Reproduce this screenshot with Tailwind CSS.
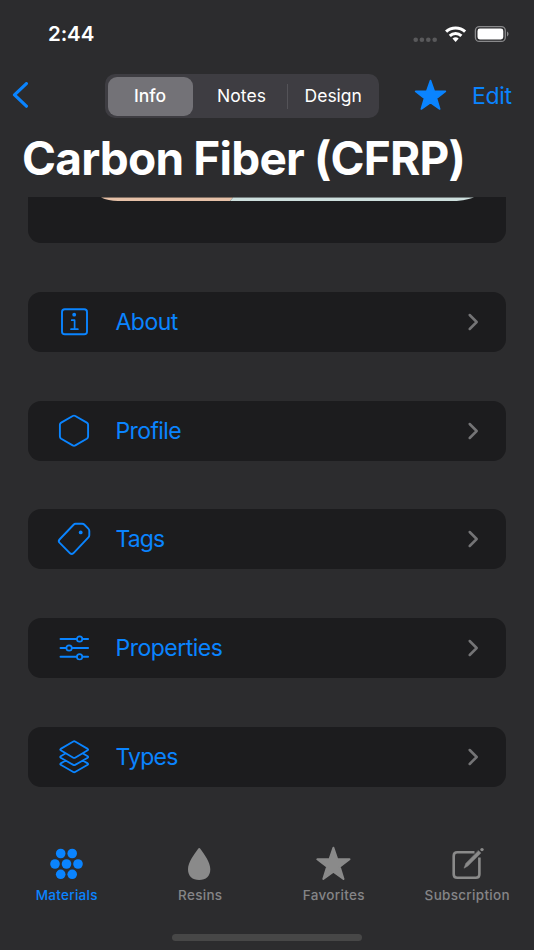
<!DOCTYPE html>
<html lang="en">
<head>
<meta charset="utf-8">
<title>Carbon Fiber (CFRP)</title>
<script src="https://cdn.jsdelivr.net/npm/@tailwindcss/browser@4"></script>
</head>
<body class="bg-[#2c2c2e]">
<div class="flex h-[950px] w-[534px] flex-col overflow-hidden bg-[#2c2c2e] font-['Inter','Liberation_Sans',sans-serif] text-white">
  <!-- Status bar -->
  <div class="flex h-[68px] shrink-0 items-center justify-between pr-[24px] pl-[48px]">
    <span class="text-[20.500px] leading-[24px] font-semibold tracking-[-0.1px]">2:44</span>
    <svg class="h-[24px] w-[98px]" viewBox="0 0 98 24" fill="none">
      <g fill="#59595b"><circle cx="3.7" cy="17.8" r="2.3"/><circle cx="9.9" cy="17.8" r="2.3"/><circle cx="16.3" cy="17.8" r="2.3"/><circle cx="22.7" cy="17.8" r="2.3"/></g>
      <g stroke="#fff" stroke-width="3.100"><path d="M34.1 9.7a14 14 0 0 1 19 0"/><path d="M37.8 13.8a8.600 8.600 0 0 1 11.600 0"/></g>
      <path fill="#fff" d="M40.500 16.600a4.800 4.800 0 0 1 6.200 0L43.600 20Z"/>
      <rect x="63.4" y="4.6" width="29.9" height="14.8" rx="4" stroke="#89898b" stroke-width="1.300"/>
      <rect x="65.500" y="6.500" width="25.800" height="11" rx="2.400" fill="#fff"/>
      <path d="M95 9.600c2 .8 2 4 0 4.800Z" fill="#89898b"/>
    </svg>
  </div>
  <!-- Navigation bar -->
  <div class="flex h-[56px] shrink-0 items-center pl-[12px]">
    <svg class="h-[28px] w-[18px]" viewBox="0 0 18 28" fill="none" stroke="#0a84ff" stroke-width="3.200" stroke-linecap="round" stroke-linejoin="round"><path d="M14.400 1.600 2.500 12.900l11.900 11.300"/></svg>
    <div class="ml-[75px] flex h-[44px] w-[273.500px] items-center rounded-[10px] bg-[#3e3d42] p-[3px] text-[17.500px] font-medium">
      <div class="flex h-[39px] w-[85px] shrink-0 items-center justify-center rounded-[9px] bg-[#737277] pr-[1px]">Info</div>
      <div class="flex w-[94px] shrink-0 justify-center pl-[3px] font-normal tracking-[0.1px]">Notes</div>
      <div class="h-[25px] w-px bg-[#545358]"></div>
      <div class="flex flex-1 justify-center pl-[3px] font-normal">Design</div>
    </div>
    <svg class="ml-[34.500px] h-[34px] w-[36px]" viewBox="0 0 36 34" fill="#0a84ff" stroke="#0a84ff" stroke-width="1.600" stroke-linejoin="round"><path d="m17.500 1.600 3.700 10.500 11.200.3-8.900 6.900 3.200 10.700-9.200-6.300-9.200 6.300 3.200-10.700-8.900-6.900 11.200-.3Z"/></svg>
    <span class="ml-[23px] text-[23px] leading-[28px] font-normal tracking-[-0.3px] text-[#0a84ff]">Edit</span>
  </div>
  <h1 class="h-[73px] shrink-0 pt-[6px] pl-[22px] text-[46px] leading-[56px] font-bold tracking-[-0.800px] whitespace-nowrap">Carbon Fiber (CFRP)</h1>
  <!-- Scrolling content -->
  <main class="flex h-[631px] shrink-0 flex-col gap-[48.650px] overflow-hidden px-[28px]">
    <div class="h-[46.400px] shrink-0 rounded-b-[13px] bg-[#1c1c1e]">
      <svg class="h-[5px] w-full" viewBox="0 0 478 5">
        <path d="M73 .4H205L202 4H90Q80 3.500 73 .4Z" fill="#e6c1a8"/>
        <path d="M205 .4H446Q436 4 422 4H202Z" fill="#cddfdd"/>
      </svg>
    </div>
    <div class="flex h-[60px] shrink-0 items-center rounded-[13px] bg-[#1c1c1e] pr-[26px] pl-[28px]">
      <svg class="size-[36px]" viewBox="0 0 36 36" fill="none" stroke="#0a84ff" stroke-width="1.900" stroke-linecap="round" stroke-linejoin="round"><rect x="6" y="5.300" width="25" height="25" rx="2.800"/><path d="M15.700 16.200h2.900v9M15 25.200h6.900" stroke-width="1.700"/><circle cx="18.200" cy="10.700" r="1.900" fill="#0a84ff" stroke="none"/></svg>
      <span class="ml-[23.500px] flex-1 text-[23px] leading-[28px] tracking-[-0.500px] text-[#0a84ff]">About</span>
      <svg class="h-[20px] w-[14px]" viewBox="0 0 14 20" fill="none" stroke="#747476" stroke-width="2.500" stroke-linecap="round" stroke-linejoin="round"><path d="m3.700 3 7 7-7 7"/></svg>
    </div>
    <div class="flex h-[60px] shrink-0 items-center rounded-[13px] bg-[#1c1c1e] pr-[26px] pl-[28px]">
      <svg class="size-[36px]" viewBox="0 0 36 36" fill="none" stroke="#0a84ff" stroke-width="1.900" stroke-linejoin="round"><path d="M16.700 3q1.300-.7 2.600 0l11.500 6.600q1.300.8 1.300 2.200v11.800q0 1.400-1.300 2.200l-11.500 6.600q-1.300.7-2.600 0L5.200 25.800q-1.300-.8-1.300-2.200V11.800q0-1.400 1.300-2.200Z"/></svg>
      <span class="ml-[23.500px] flex-1 text-[23px] leading-[28px] tracking-[-0.600px] text-[#0a84ff]">Profile</span>
      <svg class="h-[20px] w-[14px]" viewBox="0 0 14 20" fill="none" stroke="#747476" stroke-width="2.500" stroke-linecap="round" stroke-linejoin="round"><path d="m3.700 3 7 7-7 7"/></svg>
    </div>
    <div class="flex h-[60px] shrink-0 items-center rounded-[13px] bg-[#1c1c1e] pr-[26px] pl-[28px]">
      <svg class="size-[36px]" viewBox="0 0 36 36" fill="none" stroke="#0a84ff" stroke-width="1.900" stroke-linejoin="round"><path d="M19.500 2.700h6.700q1.200 0 2 .8l4.100 4.200q1 1 1 2.300v4.200q0 1.200-.9 2.100L17.300 32.300q-1.600 1.500-3.200 0L3.500 21.700q-1.500-1.600 0-3.200L17.800 3.500q.7-.8 1.700-.8Z"/><circle cx="24.700" cy="11.400" r="1.900" fill="#0a84ff" stroke="none"/></svg>
      <span class="ml-[23.500px] flex-1 text-[23px] leading-[28px] tracking-[-0.900px] text-[#0a84ff]">Tags</span>
      <svg class="h-[20px] w-[14px]" viewBox="0 0 14 20" fill="none" stroke="#747476" stroke-width="2.500" stroke-linecap="round" stroke-linejoin="round"><path d="m3.700 3 7 7-7 7"/></svg>
    </div>
    <div class="flex h-[60px] shrink-0 items-center rounded-[13px] bg-[#1c1c1e] pr-[26px] pl-[28px]">
      <svg class="size-[36px]" viewBox="0 0 36 36" fill="none" stroke="#0a84ff" stroke-width="1.900" stroke-linecap="round"><path d="M4.500 9h16.200M26.500 9h5.600M4.500 18h5.700M16 18h16.100M4.500 26.800h16.200M26.500 26.800h5.600"/><g stroke-width="1.700"><circle cx="23.600" cy="9" r="2.700"/><circle cx="13.100" cy="18" r="2.700"/><circle cx="23.600" cy="26.800" r="2.700"/></g></svg>
      <span class="ml-[23.500px] flex-1 text-[23px] leading-[28px] tracking-[-0.500px] text-[#0a84ff]">Properties</span>
      <svg class="h-[20px] w-[14px]" viewBox="0 0 14 20" fill="none" stroke="#747476" stroke-width="2.500" stroke-linecap="round" stroke-linejoin="round"><path d="m3.700 3 7 7-7 7"/></svg>
    </div>
    <div class="flex h-[60px] shrink-0 items-center rounded-[13px] bg-[#1c1c1e] pr-[26px] pl-[28px]">
      <svg class="size-[36px]" viewBox="0 0 36 36" fill="none" stroke="#0a84ff" stroke-width="1.800" stroke-linejoin="round"><path d="M17.300 2.500q.9-.5 1.800 0l12.600 7.400q1 .7 0 1.400l-12.600 7.400q-.9.500-1.800 0l-12.600-7.400q-1-.7 0-1.400Z"/><path d="m9.800 14.300-5.100 3q-1 .7 0 1.400l12.600 7.200q.9.500 1.800 0l12.600-7.200q1-.7 0-1.400l-5.100-3M9.800 21.500l-5.100 2.900q-1 .7 0 1.400l12.600 7.200q.9.500 1.800 0l12.600-7.200q1-.7 0-1.400l-5.100-2.900"/></svg>
      <span class="ml-[23.500px] flex-1 text-[23px] leading-[28px] tracking-[-0.800px] text-[#0a84ff]">Types</span>
      <svg class="h-[20px] w-[14px]" viewBox="0 0 14 20" fill="none" stroke="#747476" stroke-width="2.500" stroke-linecap="round" stroke-linejoin="round"><path d="m3.700 3 7 7-7 7"/></svg>
    </div>
  </main>
  <!-- Tab bar -->
  <nav class="grid h-[105px] shrink-0 grid-cols-4 pt-[17px] text-[13.500px] leading-[18px] font-medium text-[#858587]">
    <div class="flex flex-col items-center text-[#0a84ff]">
      <svg class="h-[38px] w-[40px]" viewBox="0 0 40 38" fill="#0a84ff"><circle cx="13.700" cy="8.500" r="4.800"/><circle cx="25.200" cy="8.500" r="4.800"/><circle cx="8" cy="19" r="4.800"/><circle cx="19.500" cy="19" r="4.800"/><circle cx="31" cy="19" r="4.800"/><circle cx="13.700" cy="29.300" r="4.800"/><circle cx="25.200" cy="29.300" r="4.800"/></svg>
      <span class="mt-[3px] tracking-[0.300px]">Materials</span>
    </div>
    <div class="flex flex-col items-center">
      <svg class="h-[38px] w-[40px]" viewBox="0 0 40 38" fill="#8a8a8a"><path d="M18 4Q19.200 2.200 20.500 4C24 9.200 30.300 17 30.300 24.200 30.300 31 26 35 19.200 35S8 31 8 24.200C8 17 14.500 9.200 18 4Z"/></svg>
      <span class="mt-[3px] tracking-[0.300px]">Resins</span>
    </div>
    <div class="flex flex-col items-center">
      <svg class="h-[38px] w-[40px]" viewBox="0 0 40 38" fill="#8a8a8a" stroke="#8a8a8a" stroke-width="2" stroke-linejoin="round"><path d="m19.400 2.700 3.800 11.300 12.300.3-9.800 7.400 3.800 12.300-10.100-7.300-10.100 7.300 3.800-12.300-9.800-7.400 12.300-.3Z"/></svg>
      <span class="mt-[3px] tracking-[0.300px]">Favorites</span>
    </div>
    <div class="flex flex-col items-center">
      <svg class="h-[38px] w-[40px]" viewBox="0 0 40 38" fill="none" stroke="#8a8a8a" stroke-linecap="round" stroke-linejoin="round"><path stroke-width="2.600" stroke-linecap="butt" d="M27.500 7.300H10.300Q6.700 7.300 6.700 10.900V29.200Q6.700 32.800 10.300 32.800H28.800Q32.400 32.800 32.400 29.200V12.500"/><path d="M31.500 5.700 33.900 8.100 20.800 21.100 17 23.200 18.800 18.500Z" fill="#8a8a8a" stroke-width=".5"/><circle cx="35" cy="4.600" r="1.700" fill="#8a8a8a" stroke="none"/></svg>
      <span class="mt-[3px] tracking-[0.300px]">Subscription</span>
    </div>
  </nav>
  <div class="mt-[1px] h-[7px] w-[190px] shrink-0 self-center rounded-full bg-[#474747]"></div>
</div>
</body>
</html>
